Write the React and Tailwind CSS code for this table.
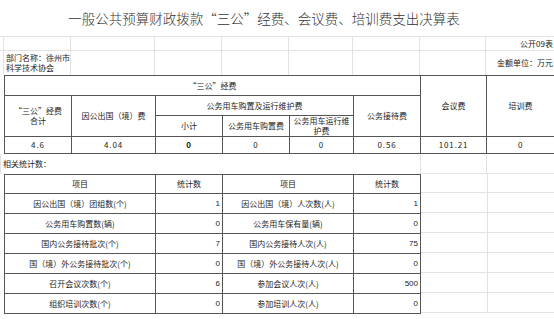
import React from 'react'

const grid = 'grid grid-cols-[4px_67px_84px_67px_67px_64px_67px_66px_68px]'
const faint = 'border-r border-b border-[#e2e2e2]'
const th = 'border border-[#555] text-center align-middle p-0 leading-[10px]'
const num = 'border border-[#555] text-center align-middle p-0 tracking-[0.9px] text-[8px] leading-[10px]'
const val = "border border-[#555] text-right align-middle p-0 pr-[2px] leading-[10px] font-['Liberation_Sans',sans-serif]"

const stats = [
  ['因公出国（境）团组数(个)', '1', '因公出国（境）人次数(人)', '1'],
  ['公务用车购置数(辆)', '0', '公务用车保有量(辆)', '0'],
  ['国内公务接待批次(个)', '7', '国内公务接待人次(人)', '75'],
  ['国（境）外公务接待批次(个)', '0', '国（境）外公务接待人次(人)', '0'],
  ['召开会议次数(个)', '6', '参加会议人次(人)', '500'],
  ['组织培训次数(个)', '0', '参加培训人次(人)', '0'],
]

export default function App() {
  return (
    <div className="w-[554px] h-[319px] overflow-hidden bg-white text-[#222] text-[8px] font-['Noto_Sans_CJK_SC',sans-serif]">
      {/* title */}
      <div className="h-[37px] flex items-center justify-center pr-[26px] border-b border-[#e2e2e2] text-[13.5px] font-light text-[#333]">
        一般公共预算财政拨款“三公”经费、会议费、培训费支出决算表
      </div>

      {/* sheet info rows */}
      <div className={`${grid} h-[14px]`}>
        <div className={faint} />
        <div className={faint} />
        <div className={faint} />
        <div className={faint} />
        <div className={faint} />
        <div className={faint} />
        <div className={faint} />
        <div className={faint} />
        <div className="border-b border-[#e2e2e2] flex items-center justify-end pr-[1px] leading-none">公开09表</div>
      </div>
      <div className={`${grid} h-[24px]`}>
        <div className="border-r border-[#e2e2e2]" />
        <div className="border-r border-[#e2e2e2] flex flex-col justify-center pl-[2px] leading-[10px]">
          <span>部门名称：徐州市</span>
          <span>科学技术协会</span>
        </div>
        <div className="border-r border-[#e2e2e2]" />
        <div className="border-r border-[#e2e2e2]" />
        <div className="border-r border-[#e2e2e2]" />
        <div className="border-r border-[#e2e2e2]" />
        <div className="border-r border-[#e2e2e2]" />
        <div className="border-r border-[#e2e2e2]" />
        <div className="flex items-center justify-end pr-[1px] leading-none">金额单位：万元</div>
      </div>

      {/* main table */}
      <table className="table-fixed border-collapse w-[550px] ml-[4px]">
        <colgroup>
          <col className="w-[67px]" />
          <col className="w-[84px]" />
          <col className="w-[67px]" />
          <col className="w-[67px]" />
          <col className="w-[64px]" />
          <col className="w-[67px]" />
          <col className="w-[66px]" />
          <col className="w-[68px]" />
        </colgroup>
        <tbody>
          <tr className="h-[20px]">
            <td colSpan={6} className={th}>“三公”经费</td>
            <td rowSpan={3} className={th}>会议费</td>
            <td rowSpan={3} className={th}>培训费</td>
          </tr>
          <tr className="h-[20px]">
            <td rowSpan={2} className={th}>“三公”经费<br />合计</td>
            <td rowSpan={2} className={th}>因公出国（境）费</td>
            <td colSpan={3} className={th}>公务用车购置及运行维护费</td>
            <td rowSpan={2} className={th}>公务接待费</td>
          </tr>
          <tr className="h-[21px]">
            <td className={th}>小计</td>
            <td className={th}>公务用车购置费</td>
            <td className={th}>公务用车运行维<br />护费</td>
          </tr>
          <tr className="h-[17px]">
            <td className={num}>4.6</td>
            <td className={num}>4.04</td>
            <td className={`${num} font-bold`}>0</td>
            <td className={num}>0</td>
            <td className={num}>0</td>
            <td className={num}>0.56</td>
            <td className={num}>101.21</td>
            <td className={num}>0</td>
          </tr>
        </tbody>
      </table>

      {/* related stats label row */}
      <div className="flex h-[20px]">
        <div className="w-[420px] border-l border-[#e2e2e2] flex items-center pl-[2px]">相关统计数：</div>
        <div className="w-[67px] border-x border-b border-[#e2e2e2]" />
        <div className="w-[67px] border-b border-[#e2e2e2]" />
      </div>

      {/* stats table + empty sheet cells */}
      <div className="flex items-start">
        <table className="table-fixed border-collapse w-[416px] ml-[4px]">
          <colgroup>
            <col className="w-[151px]" />
            <col className="w-[67px]" />
            <col className="w-[131px]" />
            <col className="w-[67px]" />
          </colgroup>
          <tbody>
            <tr className="h-[19px]">
              <td className={th}>项目</td>
              <td className={th}>统计数</td>
              <td className={th}>项目</td>
              <td className={th}>统计数</td>
            </tr>
            {stats.map((r, i) => (
              <tr key={i} className="h-[20px]">
                <td className={th}>{r[0]}</td>
                <td className={val}>{r[1]}</td>
                <td className={th}>{r[2]}</td>
                <td className={val}>{r[3]}</td>
              </tr>
            ))}
          </tbody>
        </table>
        <div className="grid grid-cols-[67px_67px] grid-rows-[19px_20px_20px_20px_20px_20px_20px]">
          {Array.from({ length: 14 }).map((_, i) => (
            <div key={i} className={i % 2 === 0 ? 'border-r border-b border-[#e2e2e2]' : 'border-b border-[#e2e2e2]'} />
          ))}
        </div>
      </div>
    </div>
  )
}
